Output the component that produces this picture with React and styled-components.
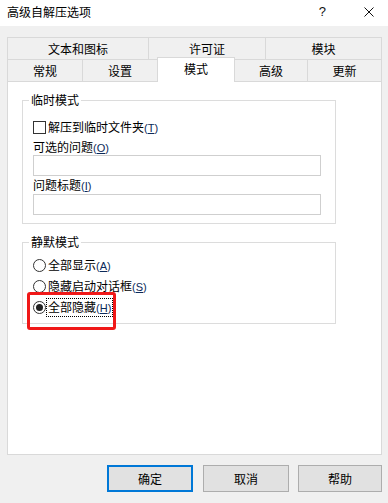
import React from "react";
import styled, { createGlobalStyle } from "styled-components";

const Global = createGlobalStyle`
  html, body { margin: 0; padding: 0; background: #f0f0f0; }
  #root { width: 388px; height: 503px; }
  * { box-sizing: border-box; }
`;

const FONT = `"Noto Sans CJK SC", "Microsoft YaHei", sans-serif`;

const Window = styled.div`
  width: 388px;
  height: 503px;
  background: #f0f0f0;
  display: flex;
  flex-direction: column;
  font-family: ${FONT};
  font-size: 12px;
  color: #000;
  overflow: hidden;
`;

const TitleBar = styled.div`
  height: 26px;
  background: #fff;
  display: flex;
  align-items: center;
  padding-left: 7px;
  padding-right: 14px;
`;

const Title = styled.div`
  flex: 1;
  font-size: 12px;
  line-height: 16px;
  margin-top: -2px;
`;

const HelpMark = styled.span`
  font-family: "Segoe UI", "Liberation Sans", sans-serif;
  font-size: 13px;
  line-height: 16px;
  margin-right: 38px;
  margin-top: -2px;
  color: #111;
`;

const CloseIcon = styled.svg`
  width: 10px;
  height: 10px;
  margin-top: -3px;
`;

const Body = styled.div`
  flex: 1;
  display: flex;
  flex-direction: column;
  padding: 11px 6px 0 7px;
`;

const TabRow = styled.div`
  display: flex;
  height: ${(p) => p.$h}px;
  align-items: flex-end;
  margin-top: ${(p) => (p.$overlap ? -1 : 0)}px;
  position: relative;
  z-index: ${(p) => (p.$front ? 2 : 1)};
`;

const Tab = styled.div`
  width: ${(p) => p.$w}px;
  height: ${(p) => p.$h}px;
  margin-left: ${(p) => (p.$first ? 0 : -1)}px;
  margin-bottom: ${(p) => (p.$active ? -1 : 0)}px;
  border: 1px solid #d9d9d9;
  border-bottom: ${(p) => (p.$noBottom ? "none" : "1px solid #d9d9d9")};
  background: ${(p) => (p.$active ? "#fff" : "#f0f0f0")};
  display: flex;
  align-items: center;
  justify-content: center;
  line-height: 16px;
  padding-bottom: ${(p) => (p.$active ? 2 : 0)}px;
  position: relative;
  z-index: ${(p) => (p.$active ? 3 : 1)};
`;

const Panel = styled.div`
  height: 374px;
  background: #fff;
  border: 1px solid #d9d9d9;
  padding: 10px 0 0 14px;
  display: flex;
  flex-direction: column;
`;

const Group = styled.fieldset`
  width: 314px;
  margin: ${(p) => p.$mt}px 0 0 0;
  padding: 0 10px ${(p) => p.$pb}px 10px;
  border: 1px solid #dcdcdc;
  min-width: 0;
  display: flex;
  flex-direction: column;
`;

const Legend = styled.legend`
  padding: 0 2px;
  margin-left: -4px;
  line-height: 16px;
  font-size: 12px;
`;

const CheckRow = styled.label`
  display: flex;
  align-items: center;
  height: 18px;
  margin-top: 10px;
  line-height: 16px;
`;

const Box = styled.span`
  width: 13px;
  height: 13px;
  border: 1px solid #333;
  background: #fff;
  margin-right: 2px;
  flex: none;
`;

const FieldLabel = styled.div`
  height: 16px;
  line-height: 16px;
  margin-top: ${(p) => p.$mt}px;
`;

const Input = styled.div`
  width: 288px;
  height: 21px;
  border: 1px solid #cfcfcf;
  background: #fff;
  margin-top: ${(p) => p.$mt}px;
`;

const RadioRow = styled.div`
  position: relative;
  display: flex;
  align-items: center;
  height: 21px;
  margin-top: ${(p) => p.$mt || 0}px;
  line-height: 16px;
`;

const Radio = styled.span`
  width: 13px;
  height: 13px;
  border-radius: 50%;
  border: 1px solid #333;
  background: #fff;
  margin-right: 2px;
  flex: none;
  display: flex;
  align-items: center;
  justify-content: center;
  &::after {
    content: "";
    display: ${(p) => (p.$checked ? "block" : "none")};
    width: 7px;
    height: 7px;
    border-radius: 50%;
    background: #222;
  }
`;

const RadioText = styled.span`
  outline: ${(p) => (p.$focus ? "1px dotted #000" : "none")};
  outline-offset: 0px;
  padding: 0 ${(p) => (p.$focus ? 1 : 0)}px;
  margin-left: ${(p) => (p.$focus ? -1 : 0)}px;
`;

const Mn = styled.span`
  font-family: "Segoe UI", "Liberation Sans", sans-serif;
  font-size: 11px;
  color: #0b2a5a;
`;

const Ul = styled.span`
  text-decoration: underline;
`;

const Highlight = styled.div`
  position: absolute;
  left: -6px;
  top: -5px;
  width: 89px;
  height: 38px;
  border: 3px solid #f01818;
  border-radius: 3px;
  pointer-events: none;
`;

const Buttons = styled.div`
  display: flex;
  justify-content: flex-end;
  margin-top: 10px;
  padding-right: 0px;
  gap: 10px;
`;

const Button = styled.div`
  width: ${(p) => p.$w}px;
  height: 27px;
  background: #e1e1e1;
  border: ${(p) => (p.$default ? "2px solid #0078d7" : "1px solid #adadad")};
  display: flex;
  align-items: center;
  justify-content: center;
  line-height: 16px;
  margin-left: ${(p) => p.$ml || 0}px;
`;

const Mnemonic = ({ ch }) => (
  <Mn>
    (<Ul>{ch}</Ul>)
  </Mn>
);

export default function App() {
  return (
    <>
      <Global />
      <Window>
        <TitleBar>
          <Title>高级自解压选项</Title>
          <HelpMark>?</HelpMark>
          <CloseIcon viewBox="0 0 10 10">
            <path d="M0.5 0.5 L9.5 9.5 M9.5 0.5 L0.5 9.5" stroke="#111" strokeWidth="1" fill="none" />
          </CloseIcon>
        </TitleBar>
        <Body>
          <TabRow $h={23}>
            <Tab $first $w={142} $h={23}>文本和图标</Tab>
            <Tab $w={118} $h={23}>许可证</Tab>
            <Tab $w={117} $h={23}>模块</Tab>
          </TabRow>
          <TabRow $h={22} $overlap $front>
            <Tab $first $w={76} $h={22} $noBottom>常规</Tab>
            <Tab $w={76} $h={22} $noBottom>设置</Tab>
            <Tab $w={78} $h={25} $noBottom $active>模式</Tab>
            <Tab $w={74} $h={22} $noBottom>高级</Tab>
            <Tab $w={75} $h={22} $noBottom>更新</Tab>
          </TabRow>
          <Panel>
            <Group $mt={0} $pb={8}>
              <Legend>临时模式</Legend>
              <CheckRow>
                <Box />
                <span>
                  解压到临时文件夹<Mnemonic ch="T" />
                </span>
              </CheckRow>
              <FieldLabel $mt={3}>
                可选的问题<Mnemonic ch="O" />
              </FieldLabel>
              <Input $mt={0} />
              <FieldLabel $mt={1}>
                问题标题<Mnemonic ch="I" />
              </FieldLabel>
              <Input $mt={1} />
            </Group>
            <Group $mt={10} $pb={5}>
              <Legend>静默模式</Legend>
              <RadioRow $mt={5}>
                <Radio />
                <RadioText>
                  全部显示<Mnemonic ch="A" />
                </RadioText>
              </RadioRow>
              <RadioRow>
                <Radio />
                <RadioText>
                  隐藏启动对话框<Mnemonic ch="S" />
                </RadioText>
              </RadioRow>
              <RadioRow>
                <Radio $checked />
                <RadioText $focus>
                  全部隐藏<Mnemonic ch="H" />
                </RadioText>
                <Highlight />
              </RadioRow>
            </Group>
          </Panel>
          <Buttons>
            <Button $default $w={86}>确定</Button>
            <Button $w={86}>取消</Button>
            <Button $w={84} $ml={-1}>帮助</Button>
          </Buttons>
        </Body>
      </Window>
    </>
  );
}
